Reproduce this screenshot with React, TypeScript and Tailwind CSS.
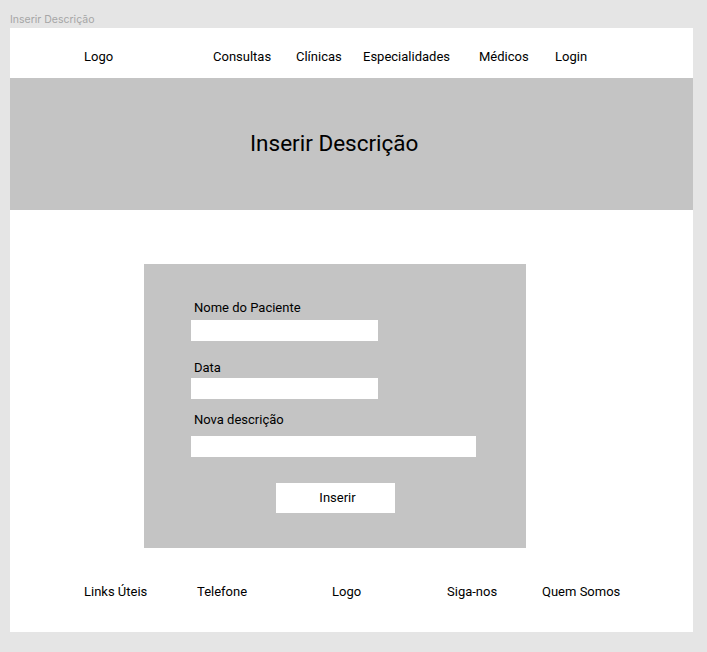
const navItems = [
  { label: 'Logo', w: 'w-[129px]' },
  { label: 'Consultas', w: 'w-[83px]' },
  { label: 'Clínicas', w: 'w-[67px]' },
  { label: 'Especialidades', w: 'w-[116px]' },
  { label: 'Médicos', w: 'w-[76px]' },
  { label: 'Login', w: 'w-[60px]' },
];

const footerItems = [
  { label: 'Links Úteis', w: 'w-[113px]' },
  { label: 'Telefone', w: 'w-[135px]' },
  { label: 'Logo', w: 'w-[115px]' },
  { label: 'Siga-nos', w: 'w-[95px]' },
  { label: 'Quem Somos', w: 'w-[90px]' },
];

export default function App() {
  return (
    <div className="min-h-[652px] bg-[#e5e5e5] px-[10px] pb-[20px] font-['Roboto',sans-serif] text-black">
      <div className="h-[28px] pt-[13px] font-['Inter',sans-serif] text-[10.5px] leading-[13px] text-[#a6a6a6]">
        Inserir Descrição
      </div>

      <div className="w-[683px] h-[604px] bg-white">
        {/* header */}
        <nav className="h-[50px] flex pl-[74px] pt-[21px] text-[13px] leading-4">
          {navItems.map((item) => (
            <div key={item.label} className={item.w}>
              {item.label}
            </div>
          ))}
        </nav>

        {/* banner */}
        <div className="h-[132px] bg-[#c4c4c4] pl-[240px] pt-[52px] text-[22.5px] leading-[27px]">
          Inserir Descrição
        </div>

        {/* form */}
        <div className="pt-[54px] pl-[134px]">
          <div className="w-[382px] h-[284px] bg-[#c4c4c4] pl-[47px] pt-[36px] text-[13px] leading-4">
            <div className="pl-[3px]">Nome do Paciente</div>
            <div className="mt-[4px] w-[187px] h-[21px] bg-white" />

            <div className="mt-[19px] pl-[3px]">Data</div>
            <div className="mt-[2px] w-[187px] h-[21px] bg-white" />

            <div className="mt-[13px] pl-[3px]">Nova descrição</div>
            <div className="mt-[8px] w-[285px] h-[21px] bg-white" />

            <div className="mt-[26px] ml-[85px] w-[119px] h-[30px] bg-white flex items-center justify-center pl-[4px]">
              Inserir
            </div>
          </div>
        </div>

        {/* footer */}
        <footer className="flex pl-[74px] pt-[36px] text-[13px] leading-4">
          {footerItems.map((item) => (
            <div key={item.label} className={item.w}>
              {item.label}
            </div>
          ))}
        </footer>
      </div>
    </div>
  );
}
